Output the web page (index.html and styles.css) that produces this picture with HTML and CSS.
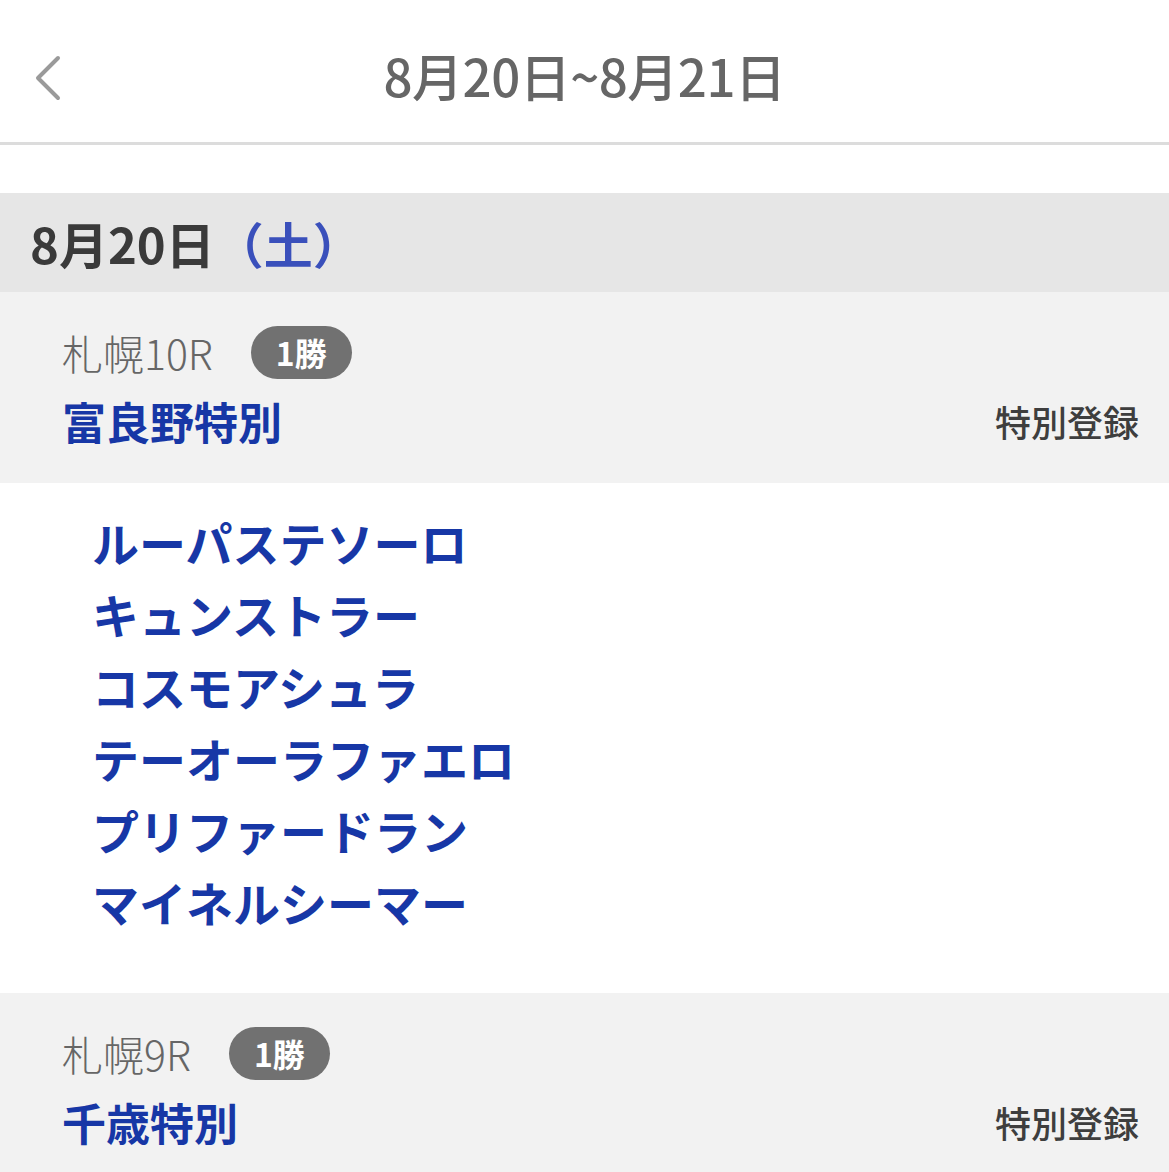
FILE: index.html
```html
<!DOCTYPE html>
<html lang="ja">
<head>
    <meta charset="UTF-8">
    <meta name="viewport" content="width=device-width, initial-scale=1.0">
    <title>特別登録</title>
    <link rel="stylesheet" href="styles.css">
</head>
<body>

    <header class="topbar">
        <a class="back" href="#">
            <svg width="30" height="46" viewBox="0 0 30 46">
                <polyline points="24,3 4,23 24,43" fill="none" stroke="#9a9a9a" stroke-width="4" stroke-linecap="round" stroke-linejoin="round"/>
            </svg>
        </a>
        <h1 class="title">8月20日~8月21日</h1>
        <div></div>
    </header>

    <div class="spacer"></div>

    <div class="day-head">8月20日<span class="weekday">（土）</span></div>

    <section class="race">
        <div class="race-meta">
            <span class="course">札幌10R</span>
            <span class="grade">1勝</span>
        </div>
        <div class="race-title">
            <span class="race-name">富良野特別</span>
            <span class="entry">特別登録</span>
        </div>
    </section>
    <ul class="horses">
        <li>ルーパステソーロ</li>
        <li>キュンストラー</li>
        <li>コスモアシュラ</li>
        <li>テーオーラファエロ</li>
        <li>プリファードラン</li>
        <li>マイネルシーマー</li>
    </ul>

    <section class="race">
        <div class="race-meta">
            <span class="course">札幌9R</span>
            <span class="grade">1勝</span>
        </div>
        <div class="race-title">
            <span class="race-name">千歳特別</span>
            <span class="entry">特別登録</span>
        </div>
    </section>

</body>
</html>
```
FILE: styles.css
```css
body {
    margin: 0;
    background: #fff;
    font-family: "Noto Sans CJK JP", "Noto Sans", sans-serif;
}

.topbar {
    height: 142px;
    display: grid;
    grid-template-columns: 1fr auto 1fr;
    align-items: center;
    border-bottom: 3px solid #dcdcdc;
}

.back {
    display: flex;
    padding-left: 34px;
    padding-top: 14px;
}

.title {
    margin: 0;
    padding-top: 8px;
    font-size: 51px;
    font-weight: 500;
    color: #666;
    letter-spacing: -0.5px;
}

.spacer {
    height: 48px;
}

.day-head {
    height: 99px;
    display: flex;
    align-items: center;
    padding-left: 30px;
    background: #e6e6e6;
    font-size: 49px;
    font-weight: bold;
    color: #3a3a3a;
}

.weekday {
    color: #3a50bb;
}

.race {
    background: #f2f2f2;
    padding: 33px 30px 32px 62px;
}

.race-meta {
    height: 54px;
    display: flex;
    align-items: center;
    gap: 38px;
}

.course {
    font-size: 41px;
    font-weight: 300;
    color: #666;
}

.grade {
    height: 53px;
    padding: 0 25px;
    display: flex;
    align-items: center;
    border-radius: 27px;
    background: #717171;
    color: #fff;
    font-size: 32px;
    font-weight: bold;
}

.race-title {
    margin-top: 12px;
    height: 60px;
    display: flex;
    align-items: center;
    justify-content: space-between;
}

.race-name {
    font-size: 44px;
    font-weight: bold;
    color: #1737a6;
}

.entry {
    font-size: 36px;
    font-weight: 500;
    color: #3e3e3e;
}

.horses {
    list-style: none;
    margin: 0;
    padding: 23px 0 55px 92px;
}

.horses li {
    height: 72px;
    line-height: 72px;
    font-size: 47px;
    font-weight: bold;
    color: #1737a6;
}
```
